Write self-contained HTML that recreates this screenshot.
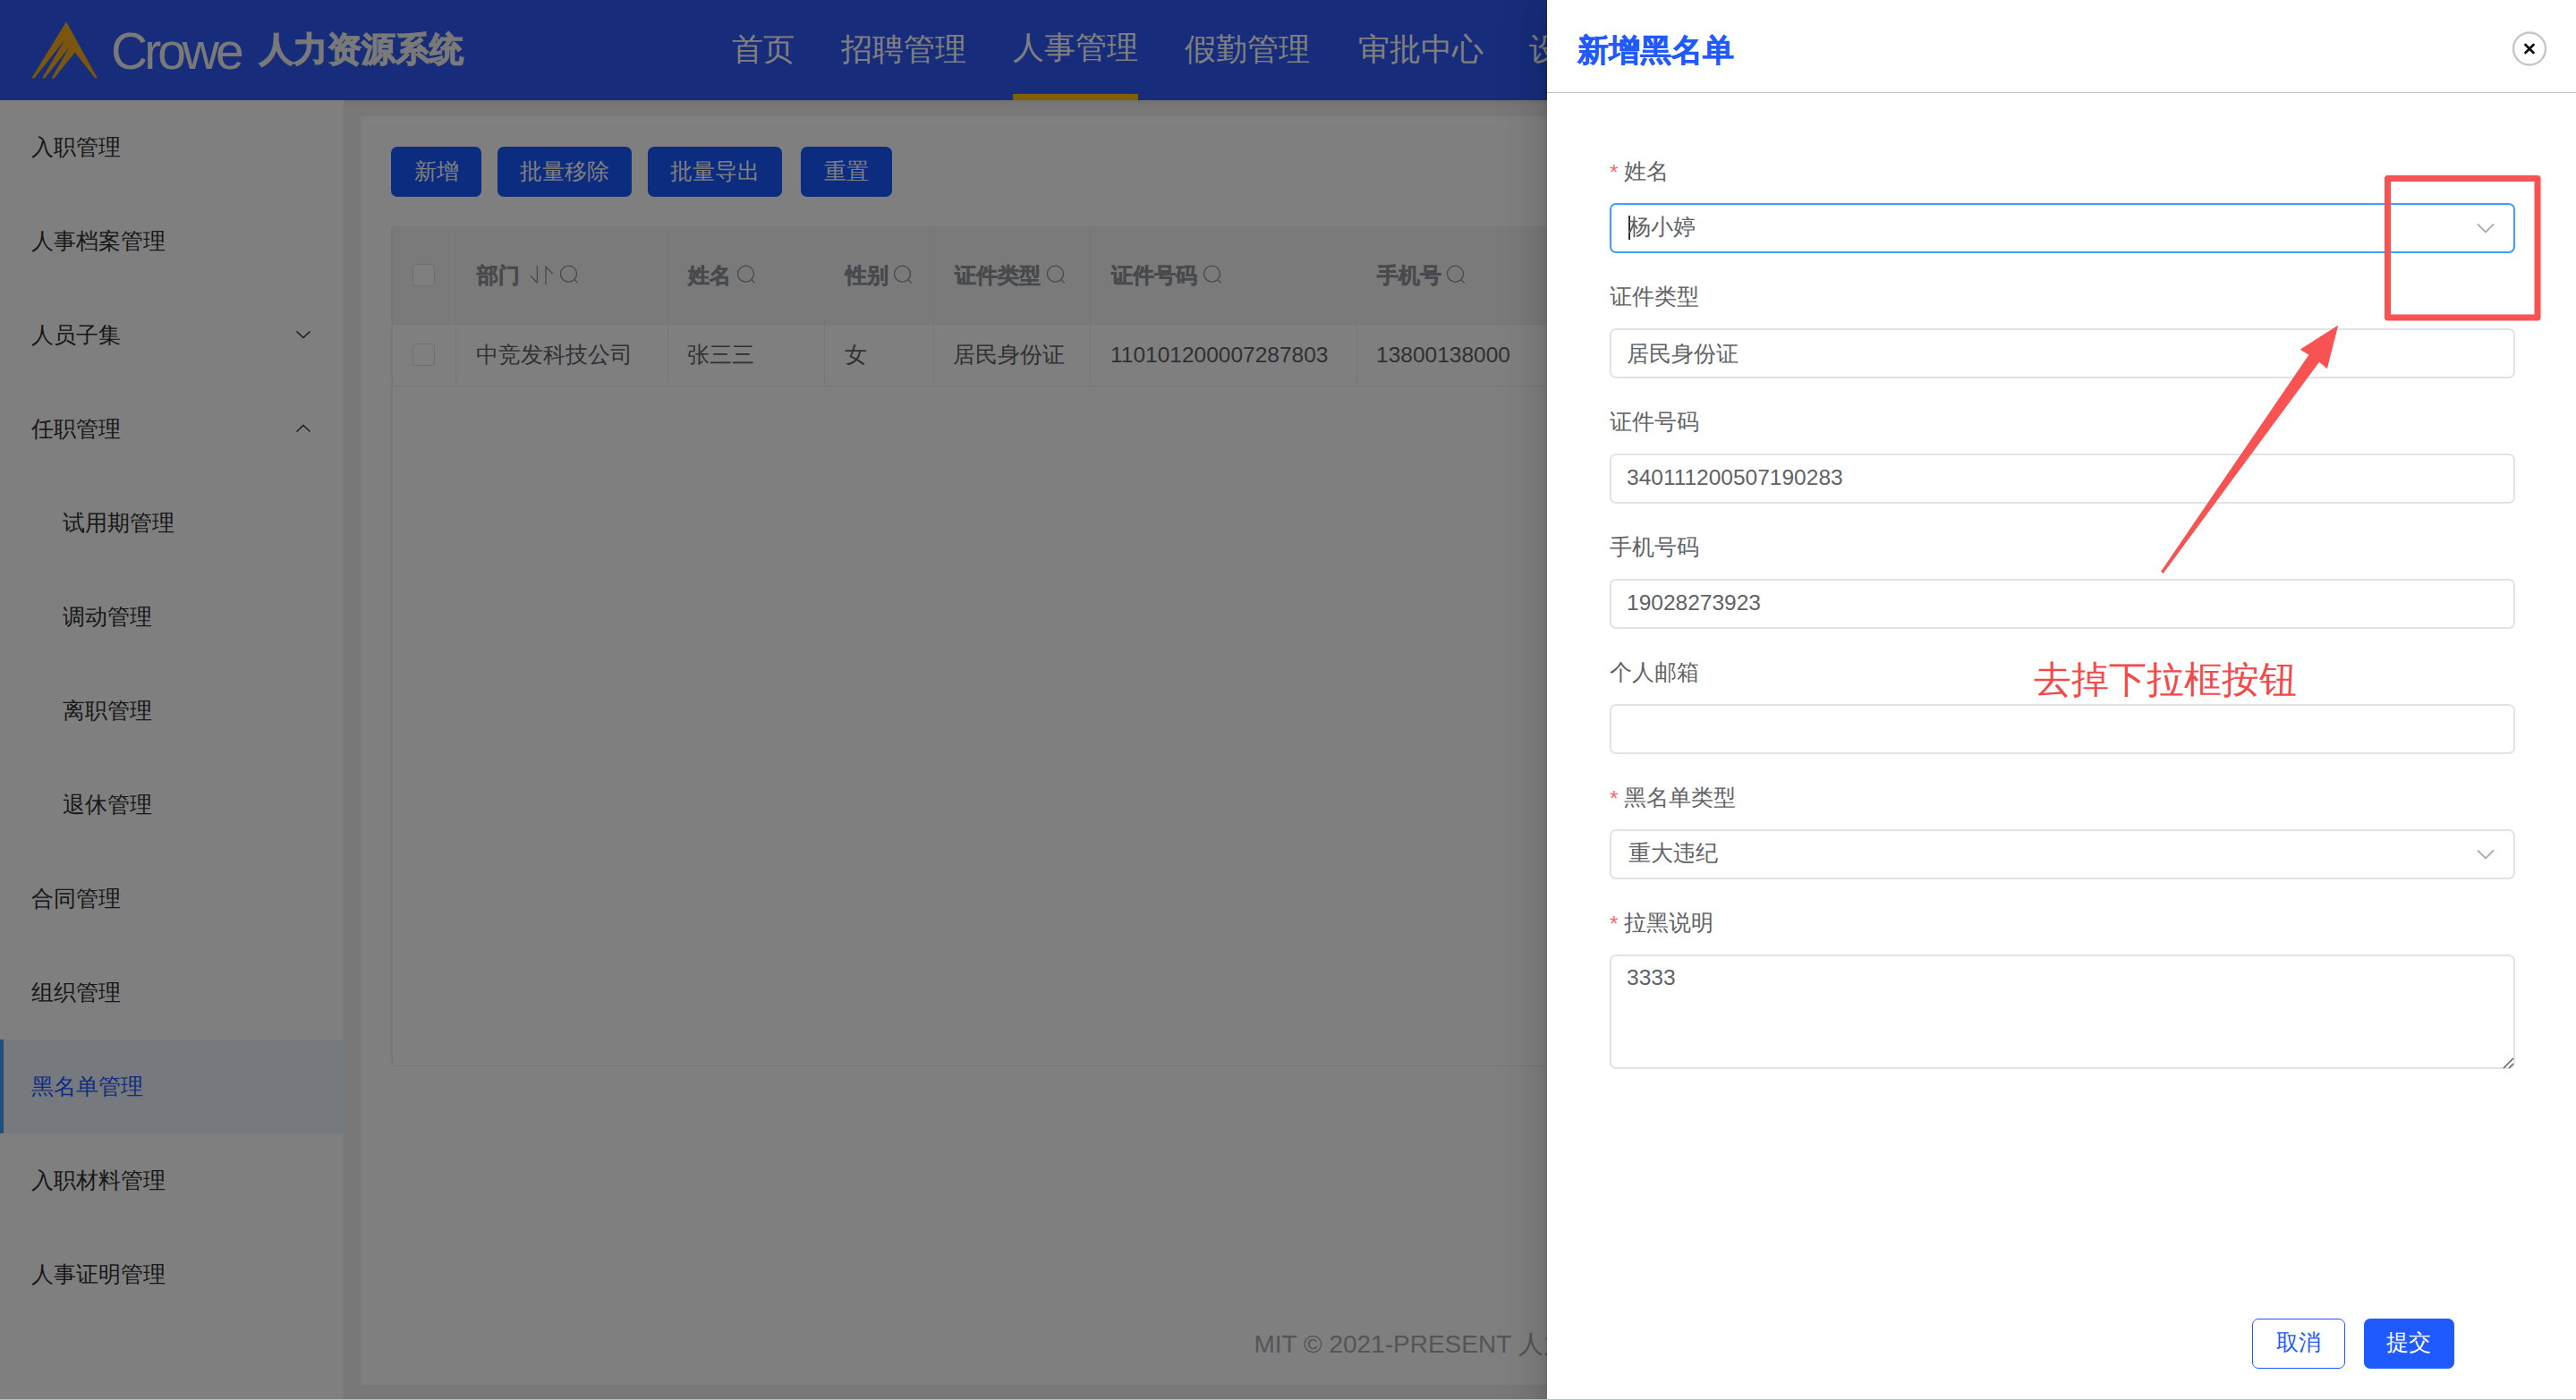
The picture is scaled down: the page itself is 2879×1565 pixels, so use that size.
<!DOCTYPE html>
<html><head><meta charset="utf-8">
<style>
*{box-sizing:border-box;margin:0;padding:0}
html,body{width:2879px;height:1565px;overflow:hidden;background:#f0f0f0;font-family:"Liberation Sans",sans-serif;position:relative}
.abs{position:absolute}
.t{position:absolute;white-space:nowrap;line-height:1}
#header{left:0;top:0;width:2879px;height:112px;background:#2f5af6;box-shadow:0 1px 6px rgba(0,0,0,.12)}
.nav{font-size:35px;color:#fff;top:37px}
#side{left:0;top:112px;width:384px;height:1453px;background:#fff}
.mi{font-size:24.5px;color:#303133}
#card{left:403px;top:130px;width:2457px;height:1418px;background:#fff}
.btn{position:absolute;top:164px;height:56px;background:#1858ff;border-radius:7px}
.btn span{position:absolute;left:0;right:0;top:16px;text-align:center;font-size:24.5px;line-height:1;color:#fff}
#table{left:437px;top:253px;width:2423px;height:939px;border-left:2px solid #ebeef5;border-bottom:1px solid #ebeef5}
.th{font-size:24px;font-weight:bold;color:#909399;-webkit-text-stroke:0.5px #909399}
.td{font-size:24.5px;color:#606266}
.vl{position:absolute;width:1px;background:#ebeef5}
.cb{position:absolute;width:25px;height:25px;border:1.5px solid #dcdfe6;border-radius:3px;background:#fff}
#overlay{left:0;top:0;width:2879px;height:1565px;background:rgba(0,0,0,.5)}
#drawer{left:1729px;top:0;width:1150px;height:1565px;background:#fff;box-shadow:0 16px 48px 16px rgba(0,0,0,.08),0 12px 32px rgba(0,0,0,.12),0 8px 16px -8px rgba(0,0,0,.16)}
.lbl{font-size:24.5px;color:#606266}
.req{color:#f56c6c;font-size:24.5px}
.inp{position:absolute;left:70px;width:1012px;height:56px;border:2px solid #e1e3e9;border-radius:7px;background:#fff}
.val{font-size:24.5px;color:#606266}
</style></head><body>
<div id="page">
  <div id="header" class="abs">
    <svg class="abs" style="left:28px;top:18px" width="90" height="75" viewBox="28 18 90 75">
      <path d="M74.1,24.2 L108.9,87.4 L106.4,87.4 L83.7,58.6 L60.5,87.4 L57.6,87.4 L77.6,52.6 L50.0,87.4 L46.9,87.4 L72.8,44.0 L38.4,87.4 L35.2,87.4 Z" fill="#f4ac1e"/>
    </svg>
    <div class="t" style="left:124px;top:28.5px;font-size:57px;color:#f2f2f2;letter-spacing:-4px">Crowe</div>
    <div class="t" style="left:290px;top:36px;font-size:38px;font-weight:bold;color:#f2f2f2;-webkit-text-stroke:1.2px #f2f2f2">人力资源系统</div>
    <div class="t nav" style="left:818px">首页</div>
    <div class="t nav" style="left:940px">招聘管理</div>
    <div class="t nav" style="left:1132px;top:35px">人事管理</div>
    <div class="abs" style="left:1132px;top:105px;width:140px;height:7px;background:#ffbe00"></div>
    <div class="t nav" style="left:1324px">假勤管理</div>
    <div class="t nav" style="left:1518px">审批中心</div>
    <div class="t nav" style="left:1709px">设置</div>
  </div>
  <div id="side" class="abs">
    <div class="t mi" style="left:35px;top:41px">入职管理</div>
    <div class="t mi" style="left:35px;top:146px">人事档案管理</div>
    <div class="t mi" style="left:35px;top:251px">人员子集</div>
    <svg class="abs" style="left:330px;top:257px" width="18" height="10" viewBox="0 0 18 10"><polyline points="1.5,1.5 9,8.5 16.5,1.5" fill="none" stroke="#303133" stroke-width="1.4"/></svg>
    <div class="t mi" style="left:35px;top:356px">任职管理</div>
    <svg class="abs" style="left:330px;top:362px" width="18" height="10" viewBox="0 0 18 10"><polyline points="1.5,8.5 9,1.5 16.5,8.5" fill="none" stroke="#303133" stroke-width="1.4"/></svg>
    <div class="t mi" style="left:70px;top:461px">试用期管理</div>
    <div class="t mi" style="left:70px;top:566px">调动管理</div>
    <div class="t mi" style="left:70px;top:671px">离职管理</div>
    <div class="t mi" style="left:70px;top:776px">退休管理</div>
    <div class="t mi" style="left:35px;top:881px">合同管理</div>
    <div class="t mi" style="left:35px;top:986px">组织管理</div>
    <div class="abs" style="left:0;top:1050px;width:384px;height:105px;background:#ecf5ff"></div>
    <div class="abs" style="left:0;top:1050px;width:4px;height:105px;background:#409eff"></div>
    <div class="t mi" style="left:35px;top:1091px;color:#1f5aff">黑名单管理</div>
    <div class="t mi" style="left:35px;top:1196px">入职材料管理</div>
    <div class="t mi" style="left:35px;top:1301px">人事证明管理</div>
  </div>
  <div id="card" class="abs"></div>
  <div class="btn" style="left:437px;width:101px"><span>新增</span></div>
  <div class="btn" style="left:556px;width:150px"><span>批量移除</span></div>
  <div class="btn" style="left:724px;width:150px"><span>批量导出</span></div>
  <div class="btn" style="left:895px;width:102px"><span>重置</span></div>
  <div id="table" class="abs">
    <div class="abs" style="left:0;top:0;width:2421px;height:1px;background:#ebeef5"></div>
    <div class="abs" style="left:0;top:1px;width:2421px;height:108px;background:#f4f4f4"></div>
    <div class="abs" style="left:0;top:109px;width:2421px;height:1px;background:#ebeef5"></div>
    <div class="abs" style="left:0;top:178px;width:2421px;height:1px;background:#ebeef5"></div>
  </div>
  <div class="vl" style="left:509px;top:253px;height:178px"></div>
  <div class="vl" style="left:746px;top:253px;height:178px"></div>
  <div class="vl" style="left:921px;top:253px;height:178px"></div>
  <div class="vl" style="left:1043px;top:253px;height:178px"></div>
  <div class="vl" style="left:1218px;top:253px;height:178px"></div>
  <div class="vl" style="left:1516px;top:253px;height:178px"></div>
  <div class="cb" style="left:461px;top:295px"></div>
  <div class="cb" style="left:461px;top:384px"></div>
  <div class="t th" style="left:533px;top:296px">部门</div>
  <svg class="abs" style="left:590px;top:296px" width="60" height="24" viewBox="0 0 60 24">
    <path d="M10.4 1 V20.5 M3.1 12.4 L10.4 20.3" fill="none" stroke="#909399" stroke-width="1.3"/>
    <path d="M20 22 V2.3 L27.6 9.7" fill="none" stroke="#909399" stroke-width="1.3"/>
    <circle cx="45.5" cy="10.2" r="9" fill="none" stroke="#909399" stroke-width="1.3"/>
    <path d="M52.2 16.9 L55.6 20.4" stroke="#909399" stroke-width="1.3"/>
  </svg>
<svg class="abs" style="left:823px;top:296px" width="24" height="24" viewBox="0 0 24 24"><circle cx="10.5" cy="10.2" r="9" fill="none" stroke="#909399" stroke-width="1.3"/><path d="M17.2 16.9 L20.6 20.4" stroke="#909399" stroke-width="1.3"/></svg><svg class="abs" style="left:998px;top:296px" width="24" height="24" viewBox="0 0 24 24"><circle cx="10.5" cy="10.2" r="9" fill="none" stroke="#909399" stroke-width="1.3"/><path d="M17.2 16.9 L20.6 20.4" stroke="#909399" stroke-width="1.3"/></svg><svg class="abs" style="left:1169px;top:296px" width="24" height="24" viewBox="0 0 24 24"><circle cx="10.5" cy="10.2" r="9" fill="none" stroke="#909399" stroke-width="1.3"/><path d="M17.2 16.9 L20.6 20.4" stroke="#909399" stroke-width="1.3"/></svg><svg class="abs" style="left:1343.5px;top:296px" width="24" height="24" viewBox="0 0 24 24"><circle cx="10.5" cy="10.2" r="9" fill="none" stroke="#909399" stroke-width="1.3"/><path d="M17.2 16.9 L20.6 20.4" stroke="#909399" stroke-width="1.3"/></svg><svg class="abs" style="left:1616px;top:296px" width="24" height="24" viewBox="0 0 24 24"><circle cx="10.5" cy="10.2" r="9" fill="none" stroke="#909399" stroke-width="1.3"/><path d="M17.2 16.9 L20.6 20.4" stroke="#909399" stroke-width="1.3"/></svg>
  <div class="t th" style="left:769px;top:296px">姓名</div>
  <div class="t th" style="left:945px;top:296px">性别</div>
  <div class="t th" style="left:1066.5px;top:296px">证件类型</div>
  <div class="t th" style="left:1241.5px;top:296px">证件号码</div>
  <div class="t th" style="left:1538.5px;top:296px">手机号</div>
  <div class="t td" style="left:532px;top:385px">中竞发科技公司</div>
  <div class="t td" style="left:768px;top:385px">张三三</div>
  <div class="t td" style="left:944px;top:385px">女</div>
  <div class="t td" style="left:1065px;top:385px">居民身份证</div>
  <div class="t td" style="left:1241px;top:385px">110101200007287803</div>
  <div class="t td" style="left:1538px;top:385px">13800138000</div>
  <div class="t" style="left:1401.5px;top:1489px;font-size:28px;color:#a8abb2">MIT © 2021-PRESENT 人力资源系统</div>
</div>
<div id="overlay" class="abs"></div>
<div id="drawer" class="abs">
  <div class="t" style="left:34px;top:38px;font-size:35px;font-weight:bold;color:#1f5aff;-webkit-text-stroke:0.5px #1f5aff">新增黑名单</div>
  <svg class="abs" style="left:1077px;top:34px" width="42" height="42" viewBox="0 0 42 42">
    <circle cx="21" cy="20.5" r="18" fill="#fff" stroke="#c6c6c6" stroke-width="2.4"/>
    <path d="M16.5 16 L25.5 25 M25.5 16 L16.5 25" stroke="#111" stroke-width="2.7" stroke-linecap="round"/>
  </svg>
  <div class="abs" style="left:0;top:103px;width:1150px;height:1px;background:#c4c6cc"></div>

  <div class="t req" style="left:70px;top:181px">*</div>
  <div class="t lbl" style="left:86px;top:180px">姓名</div>
  <div class="inp" style="top:227px;border-color:#409eff"></div>
  <div class="abs" style="left:91px;top:241px;width:1.5px;height:27px;background:#303133"></div>
  <div class="t val" style="left:91px;top:242px">杨小婷</div>
  <svg class="abs" style="left:1039px;top:249px" width="20" height="12" viewBox="0 0 20 12"><polyline points="1,1.5 10,10.5 19,1.5" fill="none" stroke="#a8abb2" stroke-width="1.8"/></svg>

  <div class="t lbl" style="left:70px;top:320px">证件类型</div>
  <div class="inp" style="top:367px"></div>
  <div class="t val" style="left:89px;top:384px">居民身份证</div>

  <div class="t lbl" style="left:70px;top:460px">证件号码</div>
  <div class="inp" style="top:507px"></div>
  <div class="t val" style="left:89px;top:522px">340111200507190283</div>

  <div class="t lbl" style="left:70px;top:600px">手机号码</div>
  <div class="inp" style="top:647px"></div>
  <div class="t val" style="left:89px;top:662px">19028273923</div>

  <div class="t lbl" style="left:70px;top:740px">个人邮箱</div>
  <div class="inp" style="top:787px"></div>

  <div class="t req" style="left:70px;top:881px">*</div>
  <div class="t lbl" style="left:86px;top:880px">黑名单类型</div>
  <div class="inp" style="top:927px"></div>
  <div class="t val" style="left:91px;top:942px">重大违纪</div>
  <svg class="abs" style="left:1039px;top:949px" width="20" height="12" viewBox="0 0 20 12"><polyline points="1,1.5 10,10.5 19,1.5" fill="none" stroke="#a8abb2" stroke-width="1.8"/></svg>

  <div class="t req" style="left:70px;top:1021px">*</div>
  <div class="t lbl" style="left:86px;top:1020px">拉黑说明</div>
  <div class="inp" style="top:1067px;height:128px"></div>
  <div class="t val" style="left:89px;top:1081px">3333</div>
  <svg class="abs" style="left:1066.5px;top:1180.5px" width="14" height="14" viewBox="0 0 14 14"><path d="M2 13 L13 2 M8 13 L13 8" stroke="#606266" stroke-width="1.5"/></svg>

  <div class="abs" style="left:788px;top:1474px;width:104px;height:56px;border:1.5px solid #1f5aff;border-radius:7px;background:#fff"></div>
  <div class="t" style="left:815px;top:1489px;font-size:24.5px;color:#1f5aff">取消</div>
  <div class="abs" style="left:913px;top:1474px;width:101px;height:56px;background:#1f5aff;border-radius:7px"></div>
  <div class="t" style="left:938px;top:1489px;font-size:24.5px;color:#fff">提交</div>
</div>
<svg class="abs" style="left:0;top:0" width="2879" height="1565" viewBox="0 0 2879 1565">
  <rect x="2668.5" y="199.5" width="167.5" height="155.5" fill="none" stroke="#f95252" stroke-width="7" stroke-linejoin="round"/>
  <polygon points="2415.5,639 2581,396.5 2571.4,390.7 2612.5,364.5 2600.5,411.5 2592,404 2417.5,640.5" fill="#f95252" stroke="#f95252" stroke-width="1" stroke-linejoin="round"/>
</svg>
<div class="t" style="left:2273px;top:739px;font-size:42px;color:#f54848">去掉下拉框按钮</div>

<div class="abs" style="left:0;top:1564px;width:2879px;height:1px;background:#b4c6bc"></div>
</body></html>
